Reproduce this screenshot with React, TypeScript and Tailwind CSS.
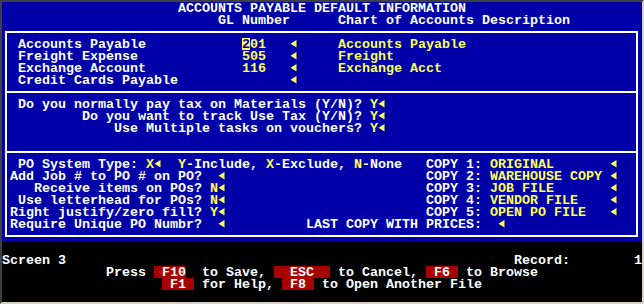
import React from 'react';

// один сегмент строки: [колонка, текст, вид]
type Kind = 'w' | 'y' | 'a' | 'c' | 'r';
type Seg = [number, string, Kind?];

const ROW = 'h-[12px] leading-[14px] whitespace-pre';

const Arrow = () => (
  <span className="inline-block w-[8px] h-[12px] align-top">
    <svg width="8" height="12" viewBox="0 0 8 12">
      <polygon points="0.5,5.7 6.5,2 6.5,9.4" fill="#ffff55" />
    </svg>
  </span>
);

const Line: React.FC<{ segs?: Seg[]; base?: number }> = ({ segs = [], base = 0 }) => {
  let pos = base;
  const out: React.ReactNode[] = [];
  segs.forEach(([c, t, k = 'w'], i) => {
    if (c > pos) out.push(<span key={'p' + i}>{' '.repeat(c - pos)}</span>);
    if (k === 'a') out.push(<Arrow key={i} />);
    else if (k === 'y') out.push(<span key={i} className="text-[#ffff55]">{t}</span>);
    else if (k === 'c')
      out.push(
        <span key={i} className="inline-block h-[12px] align-top bg-[#ffff55] text-[#0000a8]">
          {t}
        </span>
      );
    else if (k === 'r')
      out.push(
        <span key={i} className="inline-block h-[12px] align-top bg-[#a80000]">
          {t}
        </span>
      );
    else out.push(<span key={i}>{t}</span>);
    pos = c + (k === 'a' ? 1 : t.length);
  });
  return <div className={ROW}>{out}</div>;
};

const Divider = () => <div className="my-[5px] h-[2px] bg-white -ml-[3px]" />;

const glRows: Seg[][] = [
  [[2, 'Accounts Payable'], [30, '2', 'c'], [31, '01', 'y'], [36, '', 'a'], [42, 'Accounts Payable', 'y']],
  [[2, 'Freight Expense'], [30, '505', 'y'], [36, '', 'a'], [42, 'Freight', 'y']],
  [[2, 'Exchange Account'], [30, '116', 'y'], [36, '', 'a'], [42, 'Exchange Acct', 'y']],
  [[2, 'Credit Cards Payable'], [36, '', 'a']],
];

const taxRows: Seg[][] = [
  [[2, 'Do you normally pay tax on Materials (Y/N)?'], [46, 'Y', 'y'], [47, '', 'a']],
  [[10, 'Do you want to track Use Tax (Y/N)?'], [46, 'Y', 'y'], [47, '', 'a']],
  [[14, 'Use Multiple tasks on vouchers?'], [46, 'Y', 'y'], [47, '', 'a']],
  [],
];

const poRows: Seg[][] = [
  [
    [2, 'PO System Type: '], [18, 'X', 'y'], [19, '', 'a'],
    [22, 'Y', 'y'], [23, '-Include, '], [33, 'X', 'y'], [34, '-Exclude, '], [44, 'N', 'y'], [45, '-None'],
    [53, 'COPY 1: '], [61, 'ORIGINAL', 'y'], [76, '', 'a'],
  ],
  [[1, 'Add Job # to PO # on PO?'], [27, '', 'a'], [53, 'COPY 2: '], [61, 'WAREHOUSE COPY', 'y'], [76, '', 'a']],
  [[4, 'Receive items on POs?'], [26, 'N', 'y'], [27, '', 'a'], [53, 'COPY 3: '], [61, 'JOB FILE', 'y'], [76, '', 'a']],
  [[2, 'Use letterhead for POs?'], [26, 'N', 'y'], [27, '', 'a'], [53, 'COPY 4: '], [61, 'VENDOR FILE', 'y'], [76, '', 'a']],
  [[1, 'Right justify/zero fill?'], [26, 'Y', 'y'], [27, '', 'a'], [53, 'COPY 5: '], [61, 'OPEN PO FILE', 'y'], [76, '', 'a']],
  [[1, 'Require Unique PO Numbr?'], [27, '', 'a'], [38, 'LAST COPY WITH PRICES:'], [62, '', 'a']],
];

const App: React.FC = () => {
  return (
    <div className="w-[644px] h-[304px] border-2 border-t-[#404040] border-l-[#404040] border-r-[#d4d0c8] border-b-[#d4d0c8] bg-black font-['Liberation_Mono',monospace] font-bold text-[13.333px] text-white">
      <div className="h-[240px] bg-[#0000a8] flex flex-col">
        <Line segs={[[22, 'ACCOUNTS PAYABLE DEFAULT INFORMATION']]} />
        <Line segs={[[27, 'GL Number'], [42, 'Chart of Accounts Description']]} />

        <div className="mt-[5px] ml-[3px] mr-[4px] border-2 border-white pl-[3px] py-[5px]">
          {glRows.map((r, i) => (
            <Line key={i} segs={r} base={1} />
          ))}
          <Divider />
          {taxRows.map((r, i) => (
            <Line key={i} segs={r} base={1} />
          ))}
          <Divider />
          {poRows.map((r, i) => (
            <Line key={i} segs={r} base={1} />
          ))}
        </div>
      </div>

      <div className="h-[60px]">
        <Line />
        <Line segs={[[0, 'Screen 3'], [64, 'Record:'], [79, '1']]} />
        <Line
          segs={[
            [13, 'Press '], [19, ' F10', 'r'], [25, 'to Save, '], [34, '  ESC  ', 'r'],
            [42, 'to Cancel, '], [53, ' F6 ', 'r'], [58, 'to Browse'],
          ]}
        />
        <Line segs={[[20, ' F1 ', 'r'], [25, 'for Help,'], [35, ' F8 ', 'r'], [40, 'to Open Another File']]} />
        <Line />
      </div>
    </div>
  );
};

export default App;
